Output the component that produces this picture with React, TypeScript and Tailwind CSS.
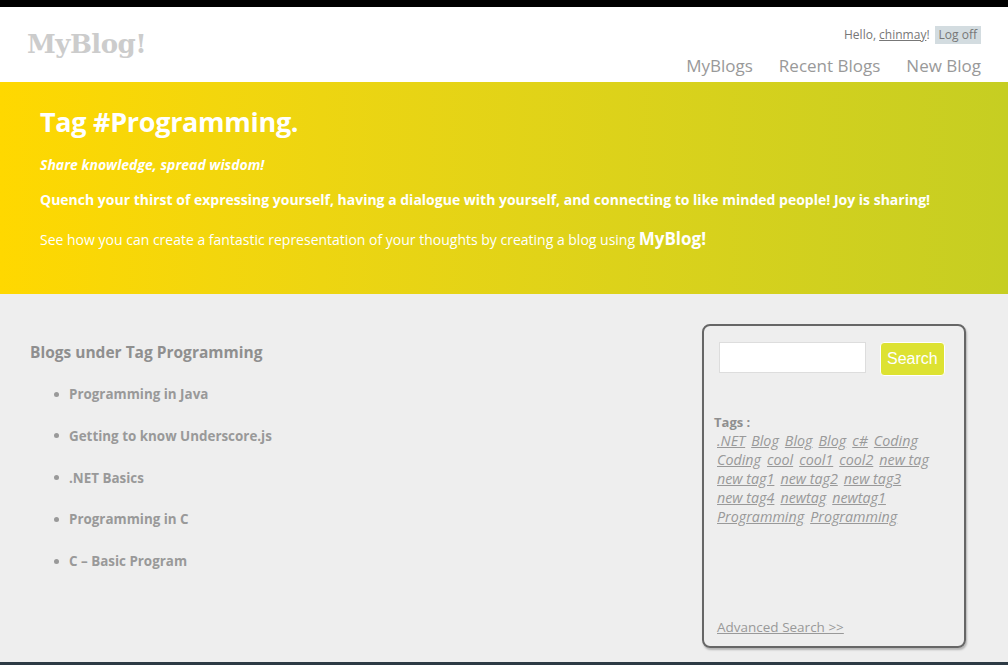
const tags = [
  '.NET', 'Blog', 'Blog', 'Blog', 'c#', 'Coding',
  'Coding', 'cool', 'cool1', 'cool2', 'new tag',
  'new tag1', 'new tag2', 'new tag3',
  'new tag4', 'newtag', 'newtag1',
  'Programming', 'Programming',
];

const blogs = [
  'Programming in Java',
  'Getting to know Underscore.js',
  '.NET Basics',
  'Programming in C',
  'C – Basic Program',
];

export default function App() {
  return (
    <div
      className="w-[1008px] h-[665px] overflow-hidden bg-[#eeeeee] flex flex-col"
      style={{ fontFamily: '"Open Sans", "Noto Sans", sans-serif' }}
    >
      <div className="h-[7px] bg-black shrink-0" />

      {/* header */}
      <header className="h-[75px] bg-white flex justify-between shrink-0 pr-[27px]">
        <div
          className="pl-[27px] pt-[24px] text-[26px] font-bold leading-none text-[#cccccc] tracking-[-0.5px]"
          style={{ fontFamily: '"DejaVu Serif", "Liberation Serif", serif' }}
        >
          MyBlog!
        </div>
        <div className="flex flex-col items-end pt-[19px]">
          <div className="flex items-center text-[12px] text-[#777777]">
            <span>
              Hello, <a className="underline text-[#777777]">chinmay</a>!
            </span>
            <span className="bg-[#d3dce0] px-[4px] h-[18px] leading-[18px] ml-[5px]">Log off</span>
          </div>
          <nav className="flex gap-[26px] text-[17px] text-[#999999] mt-[10px] leading-[24px]">
            <a>MyBlogs</a>
            <a>Recent Blogs</a>
            <a>New Blog</a>
          </nav>
        </div>
      </header>

      {/* hero */}
      <section className="h-[212px] shrink-0 bg-gradient-to-r from-[#ffd800] to-[#c6ce22] text-white pl-[40px] pt-[24px]">
        <h1 className="text-[27px] font-bold leading-[32px] tracking-[-0.3px]">Tag #Programming.</h1>
        <p className="text-[14px] font-bold italic mt-[17px] leading-[20px]">Share knowledge, spread wisdom!</p>
        <p className="text-[14px] font-bold mt-[15px] leading-[20px]">
          Quench your thirst of expressing yourself, having a dialogue with yourself, and connecting to like minded people! Joy is sharing!
        </p>
        <p className="text-[14px] mt-[17px] leading-[24px]">
          See how you can create a fantastic representation of your thoughts by creating a blog using{' '}
          <span className="text-[17px] font-bold">MyBlog!</span>
        </p>
      </section>

      {/* body */}
      <main className="flex-1 flex justify-between pr-[42px]">
        <div className="pl-[30px] pt-[48px] text-[#999999]">
          <h2 className="text-[15.5px] font-bold text-[#8f8f8f] leading-[20px]">Blogs under Tag Programming</h2>
          <ul className="mt-[22px] ml-[24px] flex flex-col gap-[21.75px]">
            {blogs.map((b) => (
              <li key={b} className="flex items-center text-[13.4px] font-bold leading-[20px]">
                <span className="w-[5px] h-[5px] rounded-full bg-[#999999] mr-[10px]" />
                <span>{b}</span>
              </li>
            ))}
          </ul>
        </div>

        <aside className="mt-[30px] w-[264px] h-[324px] border-2 border-[#666666] rounded-[8px] shadow-[1px_2px_2px_rgba(0,0,0,0.25)] flex flex-col px-[10px] pt-[16px] pb-[10px]">
          <div className="flex items-start pl-[5px]">
            <input className="w-[147px] h-[31px] bg-white border border-[#dddddd] outline-none" />
            <button
              className="ml-[14px] h-[34px] px-[6px] bg-[#dde232] text-white text-[16px] rounded-[4px] border border-white"
              style={{ fontFamily: '"Liberation Sans", Arial, sans-serif' }}
            >
              Search
            </button>
          </div>
          <div className="mt-[38px] text-[13px] font-bold text-[#8f8f8f] leading-[16px]">Tags :</div>
          <div className="mt-[1px] pl-[3px] pr-[14px] flex flex-wrap gap-x-[6px] text-[14.3px] italic text-[#999999] leading-[19px]">
            {tags.map((t, i) => (
              <a key={i} className="underline">{t}</a>
            ))}
          </div>
          <a className="mt-auto pl-[3px] text-[13.5px] underline text-[#999999] leading-[18px]">Advanced Search &gt;&gt;</a>
        </aside>
      </main>

      <div className="h-[3px] bg-[#2d3a44] shrink-0" />
    </div>
  );
}
